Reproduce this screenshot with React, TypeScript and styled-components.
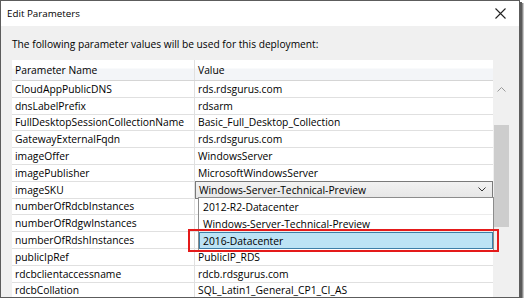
import React from 'react';
import styled, { createGlobalStyle } from 'styled-components';

const Global = createGlobalStyle`
  html, body { margin: 0; padding: 0; background: #ffffff; }
  body { font-family: "Segoe UI", "Open Sans", "Noto Sans", sans-serif; color: #000; }
`;

const Window = styled.div`
  position: relative;
  box-sizing: border-box;
  width: 520px;
  height: 298px;
  border: 1px solid #5c5c5c;
  box-shadow: 2px 2px 0 #5a5a5a, 3px 3px 0 #8a8a8a, 4px 3px 0 #c8c8c8;
  background: #f0f0f0;
  display: flex;
  flex-direction: column;
  overflow: hidden;
`;

const TitleBar = styled.div`
  height: 25px;
  flex: none;
  background: #ffffff;
  display: flex;
  align-items: center;
  justify-content: space-between;
  padding: 0 13px 0 6px;
  font-size: 9.8px;
`;

const Body = styled.div`
  flex: 1;
  display: flex;
  flex-direction: column;
  padding: 0 0 0 11px;
  min-height: 0;
`;

const Intro = styled.div`
  font-size: 10.2px;
  height: 34px;
  line-height: 36px;
`;

const TableArea = styled.div`
  display: flex;
  align-items: flex-start;
`;

const Grid = styled.div`
  position: relative;
  width: 481px;
  background: #ffffff;
  font-size: 10.3px;
`;

const Row = styled.div<{ $header?: boolean }>`
  display: grid;
  grid-template-columns: 182px 1fr;
  height: ${p => (p.$header ? '21px' : '16.8px')};
  box-sizing: border-box;
  border-bottom: 1px solid ${p => (p.$header ? '#d5d5d5' : '#e0e0e0')};
  background: ${p => (p.$header ? 'linear-gradient(#ffffff 0, #ffffff 8px, #f3f5f8 9px, #f3f5f8 100%)' : '#ffffff')};
`;

const Cell = styled.div<{ $value?: boolean }>`
  position: relative;
  padding-left: 3px;
  display: flex;
  align-items: center;
  white-space: nowrap;
  min-width: 0;
  border-left: ${p => (p.$value ? '1px solid #e0e0e0' : 'none')};
`;

const Combo = styled.div`
  position: absolute;
  left: 0;
  top: -1px;
  right: 0;
  bottom: -1px;
  box-sizing: border-box;
  border: 1px solid #7a7a7a;
  background: linear-gradient(#f2f2f2, #e6e6e6);
  display: flex;
  align-items: center;
  justify-content: space-between;
  padding: 0 6px 0 3px;
  z-index: 2;
`;

const Popup = styled.div`
  position: absolute;
  left: 2px;
  top: 15.5px;
  width: 296px;
  box-sizing: border-box;
  border: 1px solid #8c8c8c;
  background: #ffffff;
  padding: 0 0 1px 0;
  z-index: 3;
`;

const Option = styled.div<{ $selected?: boolean }>`
  position: relative;
  height: 17px;
  box-sizing: border-box;
  margin: 0;
  padding-left: 3px;
  display: flex;
  align-items: center;
  border: 1px solid ${p => (p.$selected ? '#3d7fa8' : 'transparent')};
  border-bottom: 1px solid ${p => (p.$selected ? '#3d7fa8' : '#ececec')};
  background: ${p => (p.$selected ? '#bce3f5' : '#ffffff')};
`;

const Highlight = styled.div`
  position: absolute;
  left: -12px;
  right: -7px;
  top: -4px;
  bottom: -4px;
  border: 2px solid #e41a1a;
  pointer-events: none;
`;

const ScrollBar = styled.div`
  width: 17px;
  margin-top: 21px;
  height: 230px;
  background: #f0f0f0;
  position: relative;
`;

const Arrow = styled.div`
  height: 17px;
  display: flex;
  align-items: center;
  justify-content: center;
`;

const Thumb = styled.div`
  position: absolute;
  left: 1px;
  width: 15px;
  top: 44px;
  height: 102px;
  background: #cdcdcd;
`;

const rows: [string, string][] = [
  ['CloudAppPublicDNS', 'rds.rdsgurus.com'],
  ['dnsLabelPrefix', 'rdsarm'],
  ['FullDesktopSessionCollectionName', 'Basic_Full_Desktop_Collection'],
  ['GatewayExternalFqdn', 'rds.rdsgurus.com'],
  ['imageOffer', 'WindowsServer'],
  ['imagePublisher', 'MicrosoftWindowsServer'],
  ['imageSKU', 'Windows-Server-Technical-Preview'],
  ['numberOfRdcbInstances', ''],
  ['numberOfRdgwInstances', ''],
  ['numberOfRdshInstances', ''],
  ['publicIpRef', 'PublicIP_RDS'],
  ['rdcbclientaccessname', 'rdcb.rdsgurus.com'],
  ['rdcbCollation', 'SQL_Latin1_General_CP1_CI_AS'],
];

const options = ['2012-R2-Datacenter', 'Windows-Server-Technical-Preview', '2016-Datacenter'];

export default function App() {
  return (
    <>
      <Global />
      <Window>
        <TitleBar>
          <span>Edit Parameters</span>
          <svg width="11" height="11" viewBox="0 0 11 11">
            <path d="M0.5 0.5 L10.5 10.5 M10.5 0.5 L0.5 10.5" stroke="#222" strokeWidth="1.1" fill="none" />
          </svg>
        </TitleBar>
        <Body>
          <Intro>The following parameter values will be used for this deployment:</Intro>
          <TableArea>
            <Grid>
              <Row $header>
                <Cell>Parameter Name</Cell>
                <Cell $value>Value</Cell>
              </Row>
              {rows.map(([name, value]) => (
                <Row key={name}>
                  <Cell>{name}</Cell>
                  <Cell $value>
                    {name === 'imageSKU' ? (
                      <Combo>
                        <span>{value}</span>
                        <svg width="8" height="5" viewBox="0 0 8 5">
                          <path d="M0.5 0.5 L4 4 L7.5 0.5" stroke="#333" strokeWidth="1" fill="none" />
                        </svg>
                        <Popup>
                          {options.map((o, i) => (
                            <Option key={o} $selected={i === 2}>
                              {o}
                              {i === 2 && <Highlight />}
                            </Option>
                          ))}
                        </Popup>
                      </Combo>
                    ) : (
                      value
                    )}
                  </Cell>
                </Row>
              ))}
            </Grid>
            <ScrollBar>
              <Arrow>
                <svg width="9" height="5" viewBox="0 0 9 5">
                  <path d="M0.5 4.5 L4.5 0.5 L8.5 4.5" stroke="#9a9a9a" strokeWidth="1" fill="none" />
                </svg>
              </Arrow>
              <Thumb />
            </ScrollBar>
          </TableArea>
        </Body>
      </Window>
    </>
  );
}
